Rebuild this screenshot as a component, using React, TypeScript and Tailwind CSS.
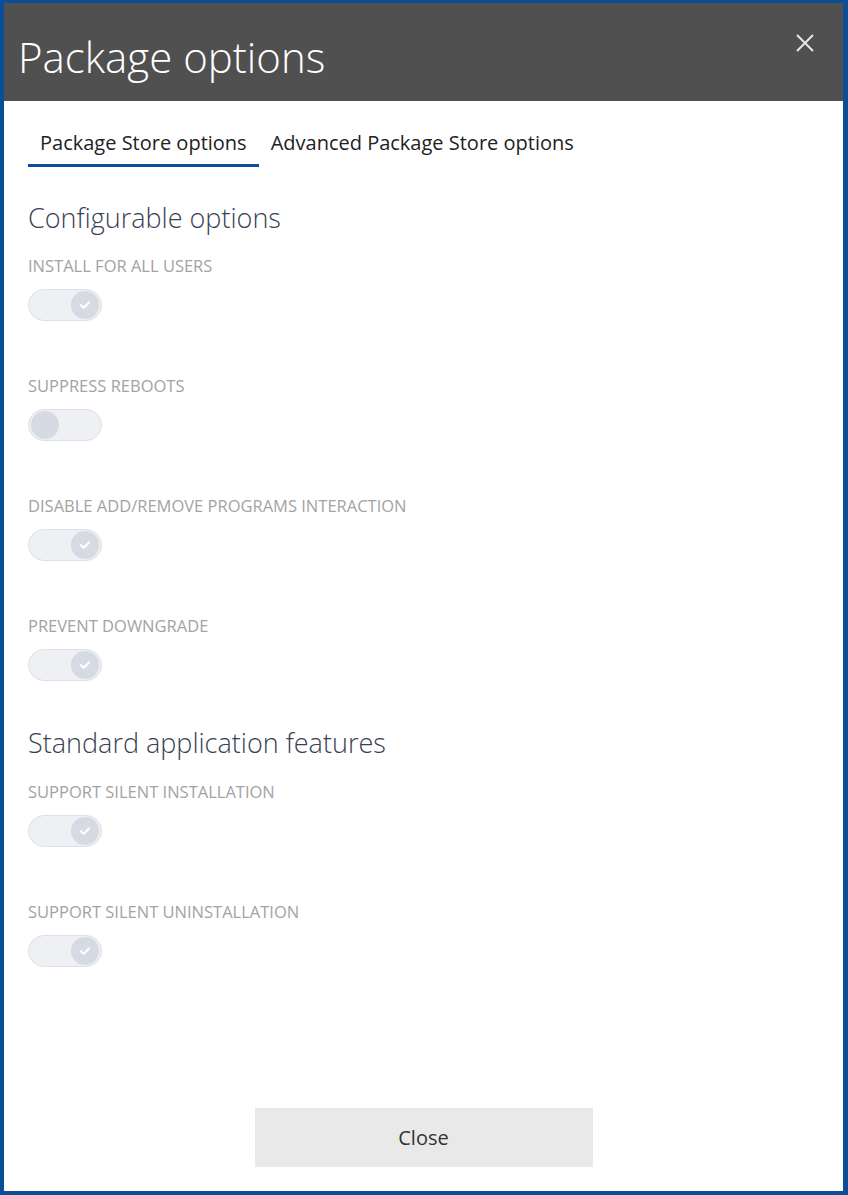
import { useState } from "react";

type Option = { label: string; on: boolean };

const configurable: Option[] = [
  { label: "Install for all users", on: true },
  { label: "Suppress reboots", on: false },
  { label: "Disable Add/Remove Programs interaction", on: true },
  { label: "Prevent downgrade", on: true },
];

const standard: Option[] = [
  { label: "Support silent installation", on: true },
  { label: "Support silent uninstallation", on: true },
];

function Toggle({ on }: { on: boolean }) {
  return (
    <div
      className={`w-[74px] h-[32px] rounded-full bg-[#eef0f4] border border-[#dde0e6] flex items-center px-[2px] ${
        on ? "justify-end" : "justify-start"
      }`}
    >
      <div className="w-[28px] h-[28px] rounded-full bg-[#d6dae2] flex items-center justify-center">
        {on && (
          <svg width="12" height="10" viewBox="0 0 12 10" fill="none">
            <path d="M2 5.2 L4.8 7.8 L10 2.4" stroke="white" strokeWidth="2.2" strokeLinecap="round" strokeLinejoin="round" />
          </svg>
        )}
      </div>
    </div>
  );
}

function OptionRow({ option }: { option: Option }) {
  return (
    <div className="h-[120px]">
      <div className="text-[16.5px] leading-[22px] uppercase text-[#a3a3a3]">{option.label}</div>
      <div className="mt-[12px]">
        <Toggle on={option.on} />
      </div>
    </div>
  );
}

export default function App() {
  const [tab, setTab] = useState(0);

  return (
    <div className="w-[848px] h-[1195px] bg-[#0b4e97] p-[4px] pt-[3px] pr-[5px] font-['Open_Sans',sans-serif]">
      <div className="h-full bg-white flex flex-col">
        <div className="h-[98px] bg-[#505050] flex items-start justify-between pl-[14px] pr-[28px]">
          <h1 className="mt-[27px] text-[42px] leading-[54px] font-light text-white">Package options</h1>
          <button className="mt-[30px] text-[#e8e8e8]" aria-label="Close">
            <svg width="20" height="20" viewBox="0 0 20 20">
              <path d="M2 2 L18 18 M18 2 L2 18" stroke="currentColor" strokeWidth="2" />
            </svg>
          </button>
        </div>

        <div className="flex px-[24px] mt-[28px]">
          {["Package Store options", "Advanced Package Store options"].map((t, i) => (
            <button
              key={t}
              onClick={() => setTab(i)}
              className={`px-[12px] pb-[7px] text-[20px] leading-[28px] text-[#222] border-b-[3px] ${
                tab === i ? "border-[#0b4e97]" : "border-transparent"
              }`}
            >
              {t}
            </button>
          ))}
        </div>

        <div className="px-[24px] flex-1">
          <h2 className="mt-[33px] text-[27px] leading-[36px] font-light text-[#3a3f55]">Configurable options</h2>
          <div className="mt-[19px]">
            {configurable.map((o) => (
              <OptionRow key={o.label} option={o} />
            ))}
          </div>
          <h2 className="mt-[-10px] text-[27px] leading-[36px] font-light text-[#3a3f55]">Standard application features</h2>
          <div className="mt-[20px]">
            {standard.map((o) => (
              <OptionRow key={o.label} option={o} />
            ))}
          </div>
        </div>

        <div className="flex justify-center pb-[24px]">
          <button className="w-[338px] h-[59px] bg-[#e9e9e9] text-[20px] text-[#333]">Close</button>
        </div>
      </div>
    </div>
  );
}
